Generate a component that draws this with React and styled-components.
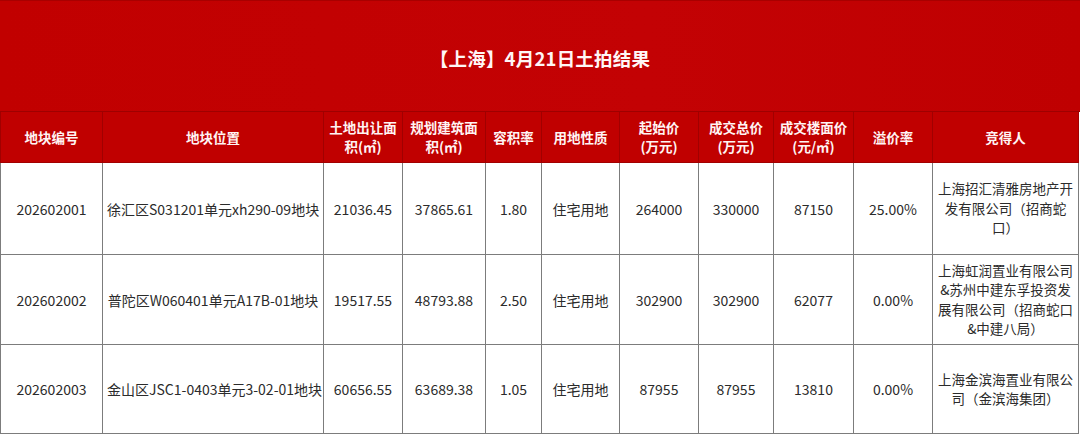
import React from 'react';
import styled, { createGlobalStyle } from 'styled-components';

const GlobalStyle = createGlobalStyle`
    html, body {
        margin : 0;
        padding : 0;
        background : #ffffff;
    }
    body {
        font-family : "Noto Sans CJK SC", "Noto Sans", sans-serif;
    }
`;

const Page = styled.div`
    width : 1080px;
    height : 436px;
    overflow : hidden;
    background : #ffffff;
`;

const Banner = styled.div`
    height : 112px;
    display : flex;
    align-items : center;
    justify-content : center;
    background : linear-gradient(90deg, #c10000 0%, #c30204 60%, #bf0001 100%);
    border-top : 1px solid #a80000;
    border-bottom : 1px solid #9e0000;
    box-sizing : border-box;
    padding-top : 4px;
`;

const Title = styled.h1`
    margin : 0;
    color : #fff6f6;
    font-size : 18.5px;
    font-weight : 700;
    letter-spacing : 0.2px;
`;

const Table = styled.table`
    width : 1078px;
    border-collapse : collapse;
    table-layout : fixed;
`;

const HeadCell = styled.th`
    height : 50px;
    padding : 0 1px;
    background : #c00000;
    color : #fff4f4;
    font-size : 13.5px;
    font-weight : 700;
    line-height : 19px;
    text-align : center;
    white-space : nowrap;
    border : 1px solid #a10000;
    border-top : none;
`;

const Row = styled.tr`
    height : ${p => p.$h}px;
`;

const Cell = styled.td`
    padding : 0 4px;
    color : #2b2b2b;
    font-size : 14px;
    line-height : 20px;
    text-align : center;
    border : 1px solid #7c7c7c;
    white-space : nowrap;
`;

const WinnerCell = styled(Cell)`
    font-size : 13.5px;
    line-height : 19.5px;
    white-space : normal;
`;

const columns = [
    { w : 102, label : ['地块编号'] },
    { w : 221, label : ['地块位置'] },
    { w : 79, label : ['土地出让面', '积(㎡)'] },
    { w : 83, label : ['规划建筑面', '积(㎡)'] },
    { w : 56, label : ['容积率'] },
    { w : 78, label : ['用地性质'] },
    { w : 79, label : ['起始价', '(万元)'] },
    { w : 75, label : ['成交总价', '(万元)'] },
    { w : 80, label : ['成交楼面价', '(元/㎡)'] },
    { w : 79, label : ['溢价率'] },
    { w : 146, label : ['竞得人'] },
];

const rows = [
    {
        h : 92,
        cells : ['202602001', '徐汇区S031201单元xh290-09地块', '21036.45', '37865.61', '1.80', '住宅用地', '264000', '330000', '87150', '25.00%'],
        winner : ['上海招汇清雅房地产开', '发有限公司（招商蛇', '口）'],
    },
    {
        h : 90,
        cells : ['202602002', '普陀区W060401单元A17B-01地块', '19517.55', '48793.88', '2.50', '住宅用地', '302900', '302900', '62077', '0.00%'],
        winner : ['上海虹润置业有限公司', '&苏州中建东孚投资发', '展有限公司（招商蛇口', '&中建八局）'],
    },
    {
        h : 89,
        cells : ['202602003', '金山区JSC1-0403单元3-02-01地块', '60656.55', '63689.38', '1.05', '住宅用地', '87955', '87955', '13810', '0.00%'],
        winner : ['上海金滨海置业有限公', '司（金滨海集团）'],
    },
];

const Lines = ({ lines }) => lines.map((l, i) => (
    <React.Fragment key={i}>
        {i > 0 && <br />}
        {l}
    </React.Fragment>
));

const App = () => {
    return (
        <Page>
            <GlobalStyle />
            <Banner>
                <Title>【上海】4月21日土拍结果</Title>
            </Banner>
            <Table>
                <colgroup>
                    {columns.map((c, i) => <col key={i} style={{ width : c.w }} />)}
                </colgroup>
                <thead>
                    <tr>
                        {columns.map((c, i) => (
                            <HeadCell key={i}><Lines lines={c.label} /></HeadCell>
                        ))}
                    </tr>
                </thead>
                <tbody>
                    {rows.map((r, i) => (
                        <Row key={i} $h={r.h}>
                            {r.cells.map((v, j) => <Cell key={j}>{v}</Cell>)}
                            <WinnerCell><Lines lines={r.winner} /></WinnerCell>
                        </Row>
                    ))}
                </tbody>
            </Table>
        </Page>
    );
};

export default App;
